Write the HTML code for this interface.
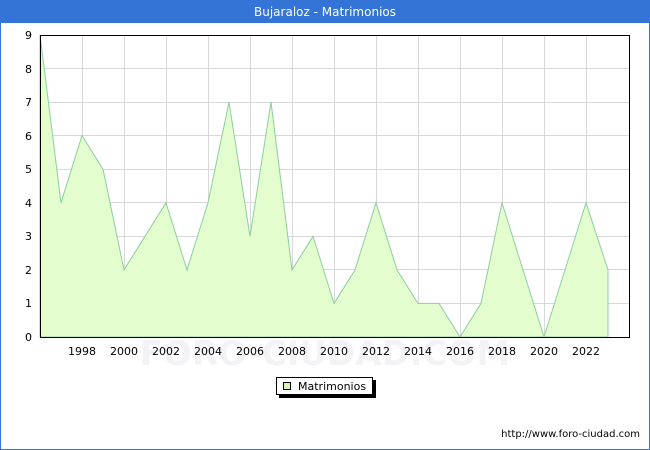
<!DOCTYPE html><html><head><style>body{margin:0}svg{display:block}</style></head><body>
<svg width="650" height="450" xmlns="http://www.w3.org/2000/svg" font-family="DejaVu Sans, Liberation Sans, sans-serif">
<rect x="0.5" y="0.5" width="649" height="449" fill="#fff" stroke="#3474d6"/>
<rect x="0" y="0" width="650" height="23" fill="#3474d6"/>
<text x="325" y="16" fill="#fff" font-size="12" text-anchor="middle">Bujaraloz - Matrimonios</text>
<text x="325" y="365" fill="#f3f3f6" font-size="34" text-anchor="middle" font-weight="bold">FORO-CIUDAD.COM</text>
<g stroke="#d8d8d8" stroke-width="1">
<line x1="40" y1="303.5" x2="630" y2="303.5"/><line x1="40" y1="269.5" x2="630" y2="269.5"/><line x1="40" y1="236.5" x2="630" y2="236.5"/><line x1="40" y1="202.5" x2="630" y2="202.5"/><line x1="40" y1="169.5" x2="630" y2="169.5"/><line x1="40" y1="135.5" x2="630" y2="135.5"/><line x1="40" y1="102.5" x2="630" y2="102.5"/><line x1="40" y1="68.5" x2="630" y2="68.5"/>
<line x1="82.5" y1="35" x2="82.5" y2="337"/><line x1="124.5" y1="35" x2="124.5" y2="337"/><line x1="166.5" y1="35" x2="166.5" y2="337"/><line x1="208.5" y1="35" x2="208.5" y2="337"/><line x1="250.5" y1="35" x2="250.5" y2="337"/><line x1="292.5" y1="35" x2="292.5" y2="337"/><line x1="334.5" y1="35" x2="334.5" y2="337"/><line x1="376.5" y1="35" x2="376.5" y2="337"/><line x1="418.5" y1="35" x2="418.5" y2="337"/><line x1="460.5" y1="35" x2="460.5" y2="337"/><line x1="502.5" y1="35" x2="502.5" y2="337"/><line x1="544.5" y1="35" x2="544.5" y2="337"/><line x1="586.5" y1="35" x2="586.5" y2="337"/>
</g>
<polygon fill="#e3fdcf" stroke="#8ccf9c" stroke-width="1" points="40,337 40,35 61,202.8 82,135.6 103,169.2 124,269.9 145,236.3 166,202.8 187,269.9 208,202.8 229,102.1 250,236.3 271,102.1 292,269.9 313,236.3 334,303.4 355,269.9 376,202.8 397,269.9 418,303.4 439,303.4 460,337 481,303.4 502,202.8 523,269.9 544,337 565,269.9 586,202.8 608,269.9 608,337"/>
<rect x="40.5" y="35.5" width="589" height="302" fill="none" stroke="#000"/>
<g font-size="11" fill="#000" text-anchor="end">
<text x="32" y="341">0</text><text x="32" y="307">1</text><text x="32" y="274">2</text><text x="32" y="240">3</text><text x="32" y="207">4</text><text x="32" y="173">5</text><text x="32" y="140">6</text><text x="32" y="106">7</text><text x="32" y="73">8</text><text x="32" y="39">9</text>
</g>
<g font-size="11" fill="#000" text-anchor="middle">
<text x="82" y="355">1998</text><text x="124" y="355">2000</text><text x="166" y="355">2002</text><text x="208" y="355">2004</text><text x="250" y="355">2006</text><text x="292" y="355">2008</text><text x="334" y="355">2010</text><text x="376" y="355">2012</text><text x="418" y="355">2014</text><text x="460" y="355">2016</text><text x="502" y="355">2018</text><text x="544" y="355">2020</text><text x="586" y="355">2022</text>
</g>
<rect x="279" y="380" width="97" height="18" fill="#000"/>
<rect x="276.5" y="377.5" width="96" height="17" fill="#fff" stroke="#000"/>
<rect x="283.5" y="382.5" width="7" height="7" fill="#d8f5b4" stroke="#000"/>
<text x="298" y="390" font-size="11">Matrimonios</text>
<text x="640" y="437" font-size="10" text-anchor="end">http://www.foro-ciudad.com</text>
</svg></body></html>
